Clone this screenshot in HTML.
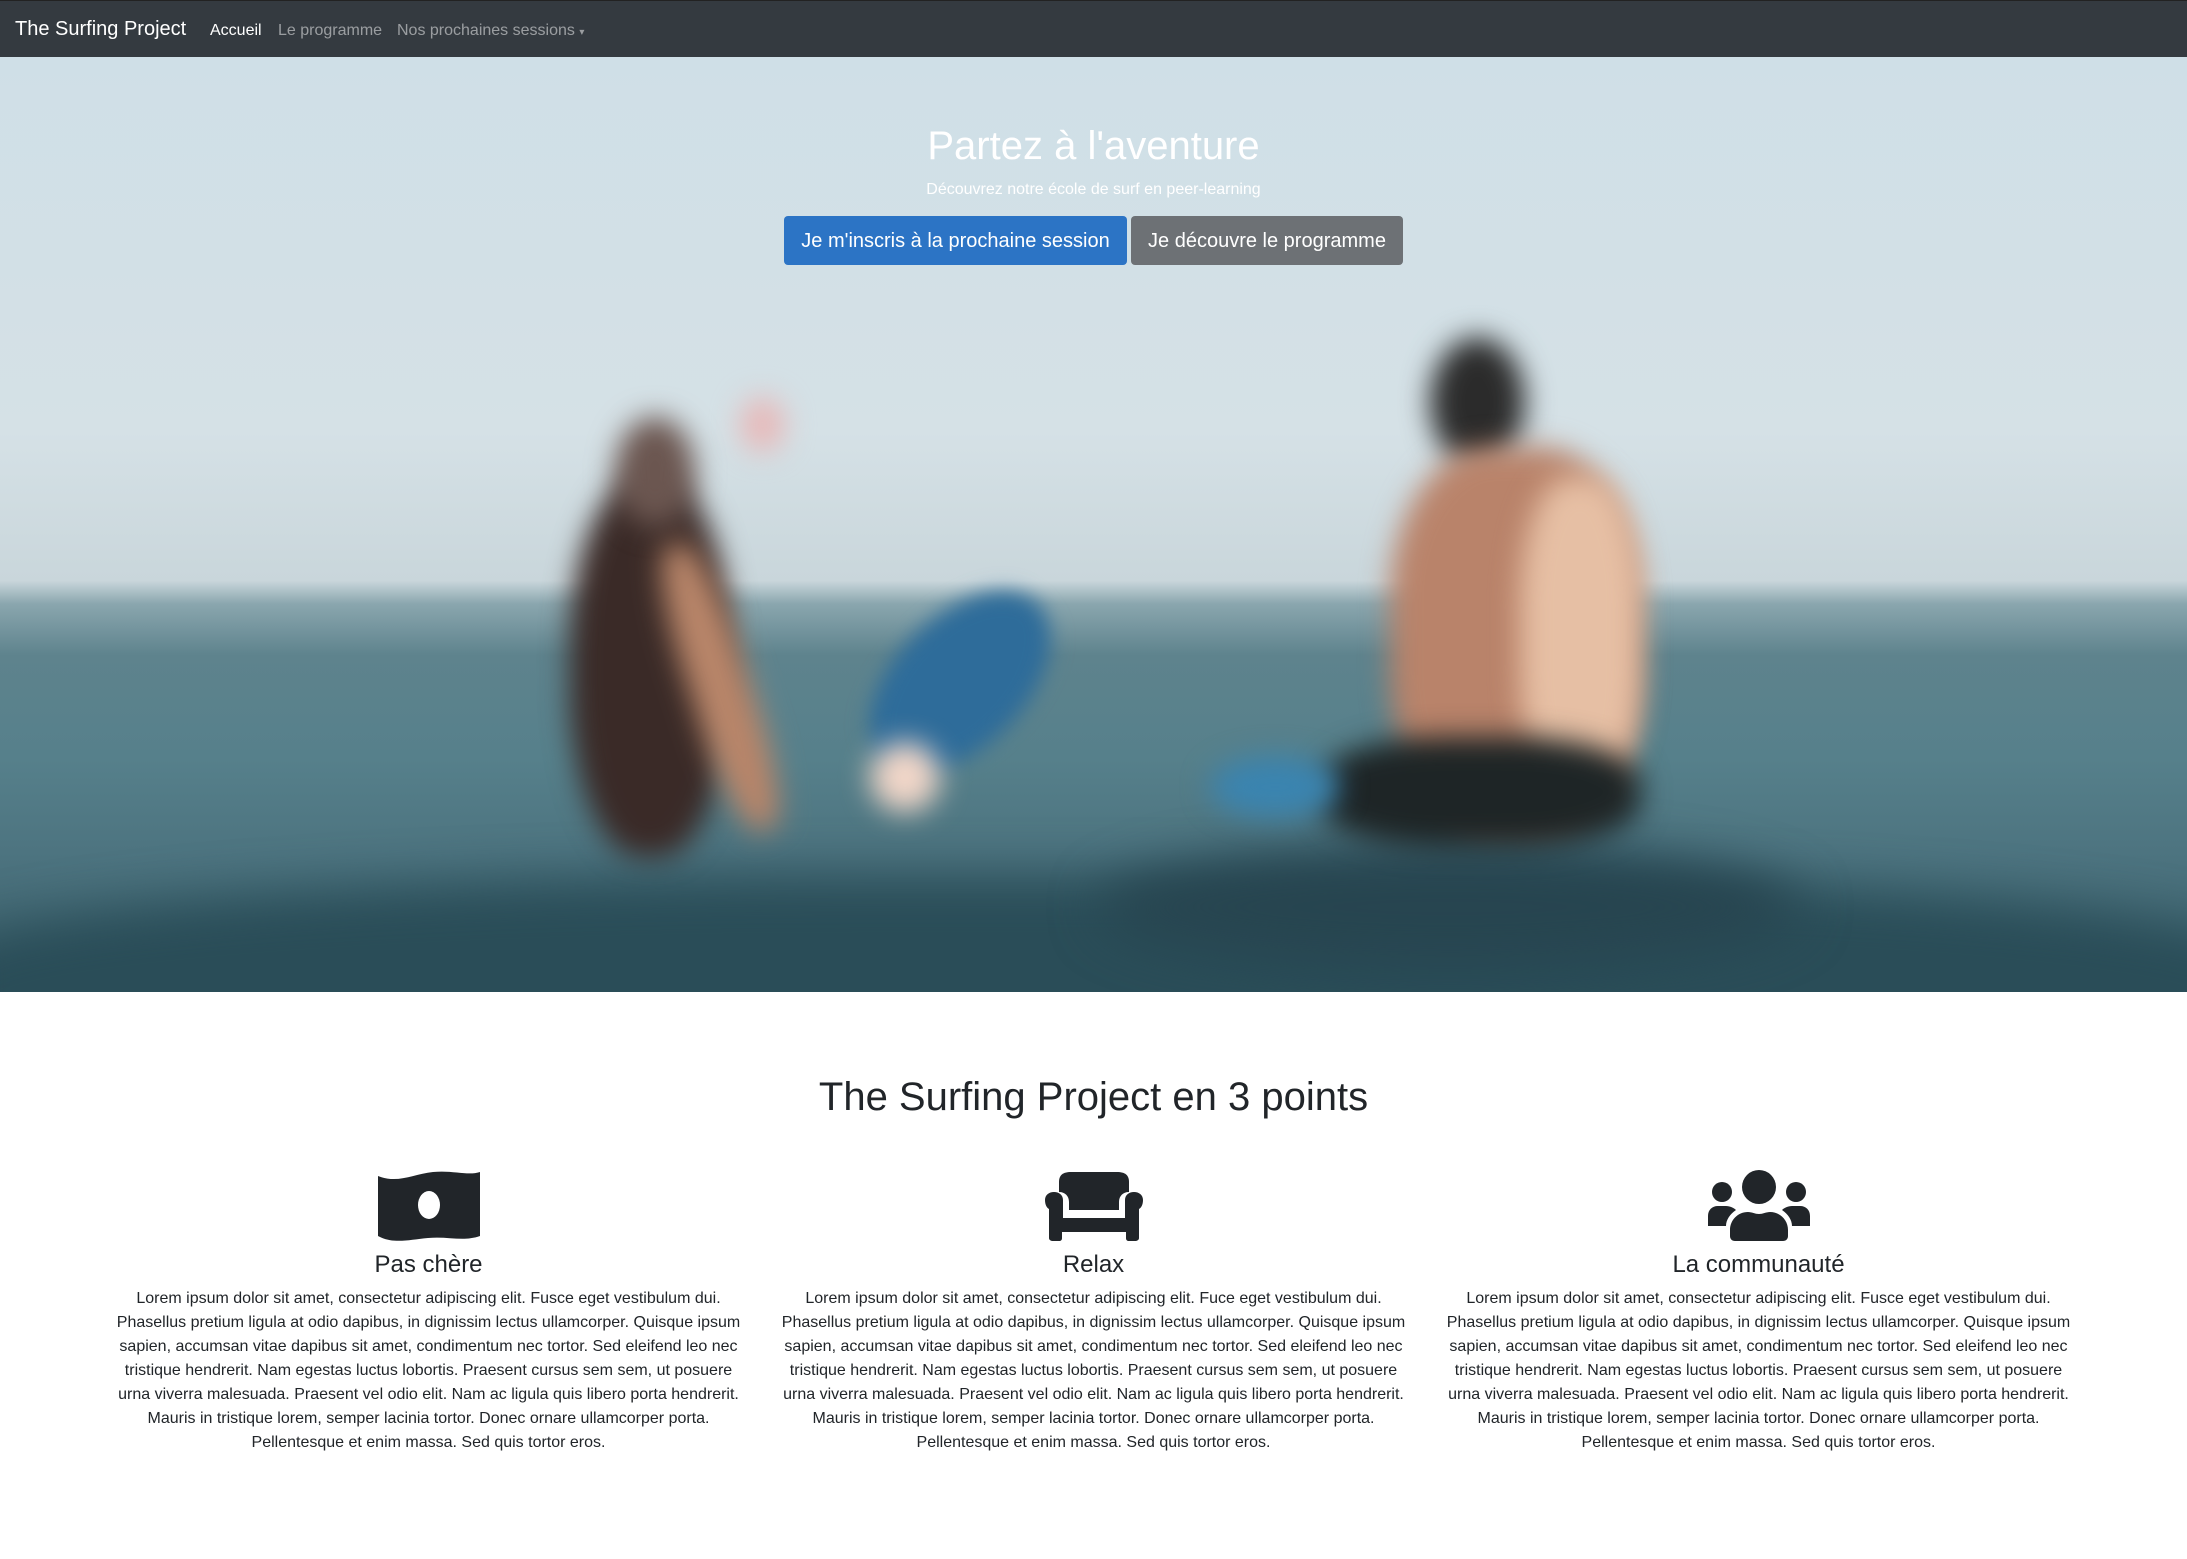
<!DOCTYPE html>
<html><head><meta charset="utf-8"><style>
*{box-sizing:border-box;margin:0;padding:0}
body{width:2187px;height:1559px;overflow:hidden;font-family:"Liberation Sans",Arial,sans-serif;background:#fff;color:#212529;position:relative}
nav{position:absolute;left:0;top:0;width:2187px;height:57px;background:#343a40;border-top:1px solid #222}
nav .brand{position:absolute;left:15px;top:17px;font-size:20px;color:#fff}
nav a{position:absolute;top:21px;font-size:16px;color:rgba(255,255,255,.5)}
.hero{position:absolute;left:0;top:57px;width:2187px;height:935px;overflow:hidden;
background:linear-gradient(180deg,#cfdfe7 0%,#d5e1e6 40%,#c9d6db 56%,#8aa6ae 58.5%,#5e838d 64%,#56808b 75%,#4d7480 85%,#3a5f6a 100%)}
.b{position:absolute;filter:blur(14px)}
.hero h1{position:absolute;top:67px;width:100%;text-align:center;font-weight:300;font-size:40px;color:#fff}
.hero p{position:absolute;top:124px;width:100%;text-align:center;font-size:16px;color:#fff;font-weight:300}
.btn{position:absolute;top:159px;height:49px;border-radius:4px;color:#fff;font-size:20px;line-height:51px;text-align:center}
h2{position:absolute;top:1075px;width:100%;text-align:center;font-size:40px;font-weight:400}
.col{position:absolute;top:1170px;width:665px;text-align:center}
.col svg{display:block;margin:0 auto;height:71px}
.col h3{font-size:24px;font-weight:400;margin-top:9px;line-height:30px}
.col p{font-size:16px;line-height:24px;margin-top:7px}
</style></head><body>
<nav><span class="brand">The Surfing Project</span>
<a style="left:210px;color:#fff">Accueil</a><a style="left:278px">Le programme</a><a style="left:397px">Nos prochaines sessions <span style="font-size:10px">▾</span></a></nav>
<div class="hero">
<div class="b" style="left:-50px;top:820px;width:2300px;height:200px;background:#2a4d58;border-radius:40% 40% 0 0;filter:blur(25px)"></div>
<div class="b" style="left:1100px;top:790px;width:700px;height:120px;background:#274550;border-radius:50%;filter:blur(25px)"></div>
<div class="b" style="left:570px;top:420px;width:160px;height:380px;background:#3a2a27;border-radius:45%"></div>
<div class="b" style="left:615px;top:360px;width:80px;height:110px;background:#6b5650;border-radius:50%"></div>
<div class="b" style="left:740px;top:340px;width:45px;height:55px;background:#e7b9b9;border-radius:50%"></div>
<div class="b" style="left:690px;top:480px;width:60px;height:300px;background:#b88569;border-radius:40%;transform:rotate(-18deg)"></div>
<div class="b" style="left:850px;top:560px;width:220px;height:130px;background:#2e6c9a;border-radius:50%;transform:rotate(-45deg);filter:blur(10px)"></div>
<div class="b" style="left:870px;top:685px;width:70px;height:70px;background:#f1d6c8;border-radius:50%"></div>
<div class="b" style="left:1430px;top:280px;width:95px;height:130px;background:#2b2b2b;border-radius:50%"></div>
<div class="b" style="left:1390px;top:390px;width:250px;height:380px;background:#b9836a;border-radius:40%"></div>
<div class="b" style="left:1520px;top:420px;width:120px;height:320px;background:#e6bfa4;border-radius:40%"></div>
<div class="b" style="left:1320px;top:680px;width:320px;height:110px;background:#1e2526;border-radius:40%"></div>
<div class="b" style="left:1210px;top:700px;width:130px;height:60px;background:#3a84b0;border-radius:50%"></div>
<h1>Partez à l'aventure</h1>
<p>Découvrez notre école de surf en peer-learning</p>
<div class="btn" style="left:784px;width:343px;background:#2c74c5">Je m'inscris à la prochaine session</div>
<div class="btn" style="left:1131px;width:272px;background:#6d7175">Je découvre le programme</div>
</div>
<h2>The Surfing Project en 3 points</h2>
<div class="col" style="left:96px">
<svg viewBox="0 0 102 71"><path fill="#212529" d="M0 6C20 14 35 4 55 2C75 0 90 6 102 2V66C85 72 70 66 50 68C30 70 15 74 0 66Z"/><ellipse cx="51" cy="35" rx="11" ry="14" fill="#fff"/></svg>
<h3>Pas chère</h3>
<p>Lorem ipsum dolor sit amet, consectetur adipiscing elit. Fusce eget vestibulum dui.<br>Phasellus pretium ligula at odio dapibus, in dignissim lectus ullamcorper. Quisque ipsum<br>sapien, accumsan vitae dapibus sit amet, condimentum nec tortor. Sed eleifend leo nec<br>tristique hendrerit. Nam egestas luctus lobortis. Praesent cursus sem sem, ut posuere<br>urna viverra malesuada. Praesent vel odio elit. Nam ac ligula quis libero porta hendrerit.<br>Mauris in tristique lorem, semper lacinia tortor. Donec ornare ullamcorper porta.<br>Pellentesque et enim massa. Sed quis tortor eros.</p></div>
<div class="col" style="left:761px">
<svg viewBox="0 0 102 71"><path fill="#212529" d="M16 22V12C16 5 20 2 28 2H74C82 2 86 5 86 12V22C80 22 76 26 76 32V40H26V32C26 26 22 22 16 22Z"/><path fill="#212529" d="M2 30C2 25 6 22 11 22C16 22 20 25 20 30V48H82V30C82 25 86 22 91 22C96 22 100 25 100 30C100 35 98 38 96 39V68C96 70 94 71 92 71H86C84 71 83 70 83 68V62H19V68C19 70 18 71 16 71H10C8 71 6 70 6 68V39C4 38 2 35 2 30Z"/></svg>
<h3>Relax</h3>
<p>Lorem ipsum dolor sit amet, consectetur adipiscing elit. Fuce eget vestibulum dui.<br>Phasellus pretium ligula at odio dapibus, in dignissim lectus ullamcorper. Quisque ipsum<br>sapien, accumsan vitae dapibus sit amet, condimentum nec tortor. Sed eleifend leo nec<br>tristique hendrerit. Nam egestas luctus lobortis. Praesent cursus sem sem, ut posuere<br>urna viverra malesuada. Praesent vel odio elit. Nam ac ligula quis libero porta hendrerit.<br>Mauris in tristique lorem, semper lacinia tortor. Donec ornare ullamcorper porta.<br>Pellentesque et enim massa. Sed quis tortor eros.</p></div>
<div class="col" style="left:1426px">
<svg viewBox="0 0 102 71"><circle cx="51" cy="17" r="17" fill="#212529"/><circle cx="14" cy="22" r="10" fill="#212529"/><circle cx="88" cy="22" r="10" fill="#212529"/><path fill="#212529" d="M0 56V46C0 40 4 36 10 36H18C22 36 26 38 28 40C22 44 18 50 18 56Z"/><path fill="#212529" d="M102 56V46C102 40 98 36 92 36H84C80 36 76 38 74 40C80 44 84 50 84 56Z"/><path fill="#212529" d="M22 66V60C22 50 30 42 40 42C44 42 47 44 51 44C55 44 58 42 62 42C72 42 80 50 80 60V66C80 69 78 71 75 71H27C24 71 22 69 22 66Z"/></svg>
<h3>La communauté</h3>
<p>Lorem ipsum dolor sit amet, consectetur adipiscing elit. Fusce eget vestibulum dui.<br>Phasellus pretium ligula at odio dapibus, in dignissim lectus ullamcorper. Quisque ipsum<br>sapien, accumsan vitae dapibus sit amet, condimentum nec tortor. Sed eleifend leo nec<br>tristique hendrerit. Nam egestas luctus lobortis. Praesent cursus sem sem, ut posuere<br>urna viverra malesuada. Praesent vel odio elit. Nam ac ligula quis libero porta hendrerit.<br>Mauris in tristique lorem, semper lacinia tortor. Donec ornare ullamcorper porta.<br>Pellentesque et enim massa. Sed quis tortor eros.</p></div>
</body></html>
